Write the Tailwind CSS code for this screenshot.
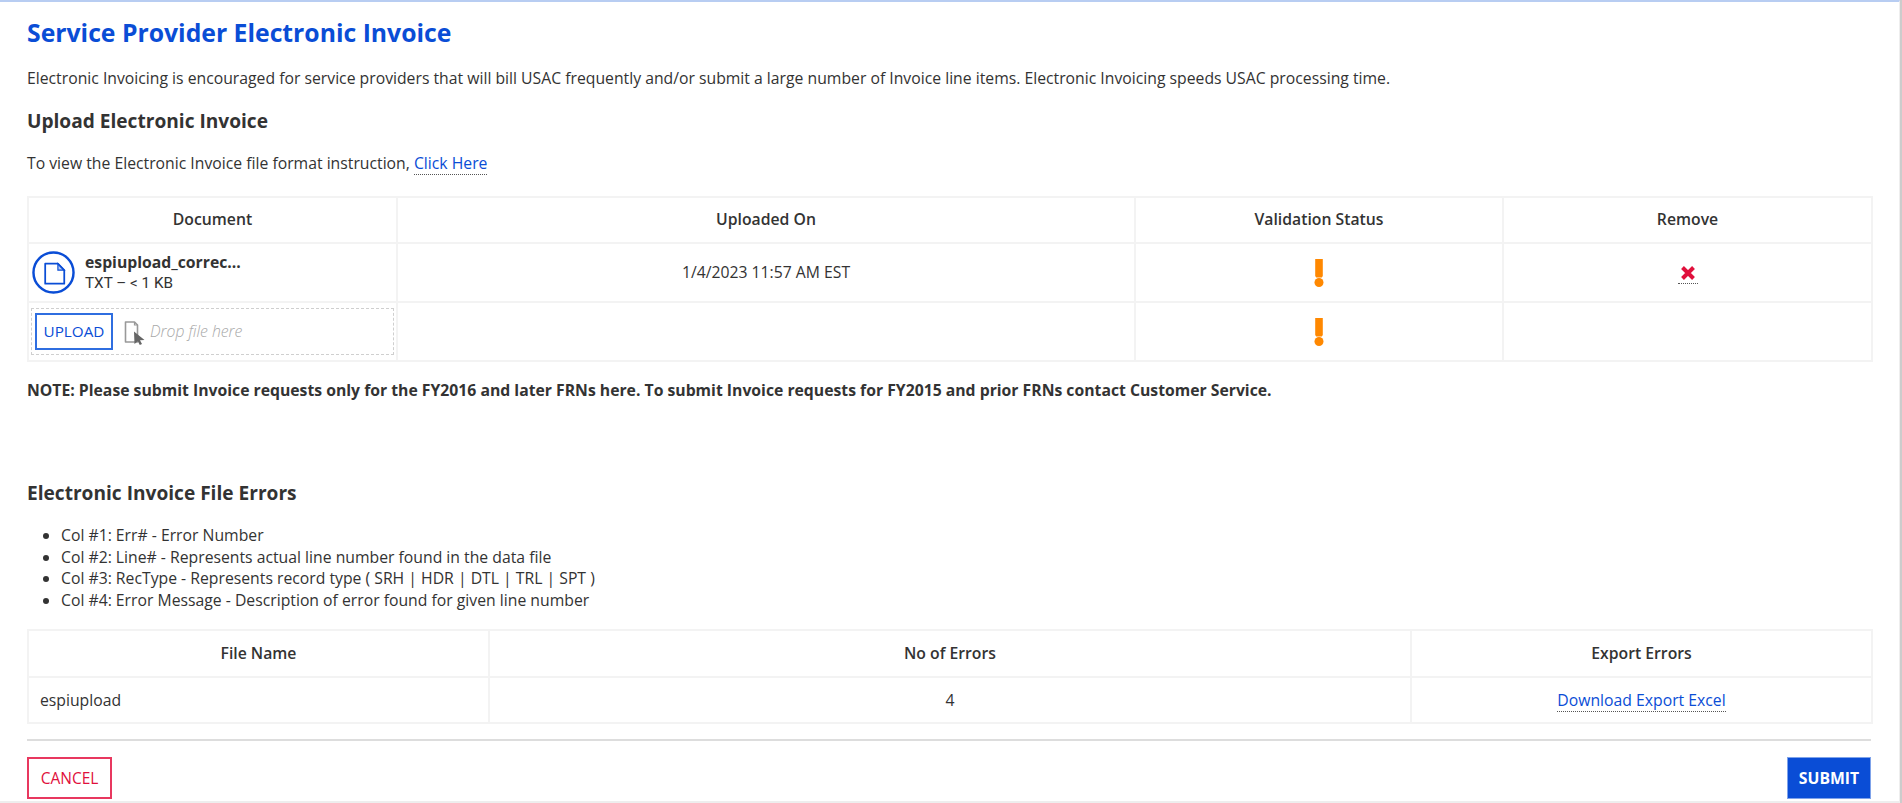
<!DOCTYPE html>
<html lang="en">
<head>
    <meta charset="UTF-8">
    <title>Service Provider Electronic Invoice</title>
    <script src="https://cdn.jsdelivr.net/npm/@tailwindcss/browser@4"></script>
</head>
<body class="bg-white font-['Open_Sans',sans-serif] text-[15.75px] text-[#333333] overflow-hidden">
    <div class="border-r-2 border-r-[#cccccc]">
    <div class="w-[1900px] h-[803px] border-t-2 border-b-2 border-r border-t-[#b8cdf2] border-b-[#eeeeee] border-r-[#eeeeee] pl-[27px] pr-[28px] flex flex-col">
        <h1 class="mt-[14px] text-[24.75px] leading-[33px] font-bold text-[#0a4dd6]">Service Provider Electronic Invoice</h1>

        <p class="mt-[19px] leading-[20px]">Electronic Invoicing is encouraged for service providers that will bill USAC frequently and/or submit a large number of Invoice line items. Electronic Invoicing speeds USAC processing time.</p>

        <h2 class="mt-[21px] text-[19.125px] leading-[24px] font-bold">Upload Electronic Invoice</h2>

        <p class="mt-[20px] leading-[20px]">To view the Electronic Invoice file format instruction, <a href="#" class="text-[#0a4dd6] border-b border-dotted border-[#555555]">Click Here</a></p>

        <!-- Upload table -->
        <table class="mt-[23px] w-[1844px] table-fixed border-collapse">
            <thead>
                <tr class="h-[46px]">
                    <th class="w-[369px] border-2 border-[#f3f3f3] font-semibold">Document</th>
                    <th class="w-[738px] border-2 border-[#f3f3f3] font-semibold">Uploaded On</th>
                    <th class="w-[368px] border-2 border-[#f3f3f3] font-semibold">Validation Status</th>
                    <th class="w-[369px] border-2 border-[#f3f3f3] font-semibold">Remove</th>
                </tr>
            </thead>
            <tbody>
                <tr class="h-[59px]">
                    <td class="border-2 border-[#f3f3f3] pl-[3px]">
                        <div class="flex items-center gap-[10px]">
                            <svg class="w-[43px] h-[43px]" viewBox="0 0 44 44" fill="none">
                                <circle cx="22" cy="22" r="20.5" stroke="#0a4dd6" stroke-width="2.5"/>
                                <path d="M13.5 13h13l6.500 6.500V33.500H13.500z" stroke="#0a4dd6" stroke-width="1.800" stroke-linejoin="round"/>
                                <path d="M26.500 13v6.500H33z" fill="#0a4dd6" fill-opacity="0.3" stroke="#0a4dd6" stroke-width="1.200"/>
                            </svg>
                            <div class="leading-[21px]">
                                <div class="font-bold">espiupload_correc...</div>
                                <div class="font-['Roboto',sans-serif] text-[15.25px]">TXT – &lt; 1 KB</div>
                            </div>
                        </div>
                    </td>
                    <td class="border-2 border-[#f3f3f3] text-center">1/4/2023 11:57 AM EST</td>
                    <td class="border-2 border-[#f3f3f3]">
                        <svg class="mx-auto w-[10px] h-[28px]" viewBox="0 0 10 28">
                            <path d="M1.2 0h7.6v17l-1 1.5h-5.600l-1-1.500z" fill="#ff8800"/>
                            <circle cx="5" cy="23.500" r="4.500" fill="#ff8800"/>
                        </svg>
                    </td>
                    <td class="border-2 border-[#f3f3f3] text-center">
                        <a href="#" class="inline-block align-middle mt-[4px] border-b border-dotted border-[#555555] pb-[3px]">
                            <svg class="block mx-[3px] w-[14px] h-[14px]" viewBox="0 0 14 14">
                                <path d="M1.500 1.500l11 11M12.500 1.500l-11 11" stroke="#e0103c" stroke-width="4"/>
                            </svg>
                        </a>
                    </td>
                </tr>
                <tr class="h-[59px]">
                    <td class="border-2 border-[#f3f3f3] p-[2px]">
                        <div class="h-[47px] border border-dashed border-[#cfcfcf] flex items-center pl-[3px]">
                            <button class="w-[78px] h-[37px] border-2 border-[#2f6ee0] text-[#0a4dd6] text-[15.250px] font-medium">UPLOAD</button>
                            <svg class="ml-[11px] w-[22px] h-[26px]" viewBox="0 0 22 26" fill="none">
                                <path d="M1.500 3h9l3 3v17h-12z" fill="#ffffff" stroke="#999999" stroke-width="1.600" stroke-linejoin="round"/>
                                <path d="M10.500 3v3h3" stroke="#999999" stroke-width="1.200"/>
                                <path d="M10 12.500L20.500 21L16 21.300L18 25L15.800 26L13.800 22.300L10.500 25z" fill="#666666"/>
                            </svg>
                            <span class="ml-[4px] italic font-light text-[#a8a8a8]">Drop file here</span>
                        </div>
                    </td>
                    <td class="border-2 border-[#f3f3f3]"></td>
                    <td class="border-2 border-[#f3f3f3]">
                        <svg class="mx-auto w-[10px] h-[28px]" viewBox="0 0 10 28">
                            <path d="M1.200 0h7.600v17l-1 1.500h-5.600l-1-1.500z" fill="#ff8800"/>
                            <circle cx="5" cy="23.500" r="4.500" fill="#ff8800"/>
                        </svg>
                    </td>
                    <td class="border-2 border-[#f3f3f3]"></td>
                </tr>
            </tbody>
        </table>

        <p class="mt-[18px] leading-[20px] font-bold">NOTE: Please submit Invoice requests only for the FY2016 and later FRNs here. To submit Invoice requests for FY2015 and prior FRNs contact Customer Service.</p>

        <h2 class="mt-[81px] text-[19.125px] leading-[24px] font-bold">Electronic Invoice File Errors</h2>

        <ul class="mt-[20px] pl-[34px] list-disc leading-[21.600px]">
            <li>Col #1: Err# - Error Number</li>
            <li>Col #2: Line# - Represents actual line number found in the data file</li>
            <li>Col #3: RecType - Represents record type ( SRH | HDR | DTL | TRL | SPT )</li>
            <li>Col #4: Error Message - Description of error found for given line number</li>
        </ul>

        <!-- Errors table -->
        <table class="mt-[18px] w-[1844px] table-fixed border-collapse">
            <thead>
                <tr class="h-[47px]">
                    <th class="w-[461px] border-2 border-[#f3f3f3] font-semibold">File Name</th>
                    <th class="w-[922px] border-2 border-[#f3f3f3] font-semibold">No of Errors</th>
                    <th class="w-[461px] border-2 border-[#f3f3f3] font-semibold">Export Errors</th>
                </tr>
            </thead>
            <tbody>
                <tr class="h-[46px]">
                    <td class="border-2 border-[#f3f3f3] pl-[11px]">espiupload</td>
                    <td class="border-2 border-[#f3f3f3] text-center">4</td>
                    <td class="border-2 border-[#f3f3f3] text-center"><a href="#" class="text-[#0a4dd6] border-b border-dotted border-[#555555]">Download Export Excel</a></td>
                </tr>
            </tbody>
        </table>

        <div class="mt-[15px] border-t-2 border-[#dddddd] pt-[16px] flex justify-between">
            <button class="w-[85px] h-[42px] border-2 border-[#e8385f] text-[#e0103c] font-medium text-[15.500px]">CANCEL</button>
            <button class="w-[84px] h-[42px] bg-[#0a4dd6] border border-[#7fa3ea] text-white font-bold">SUBMIT</button>
        </div>
    </div>
    </div>
</body>
</html>
